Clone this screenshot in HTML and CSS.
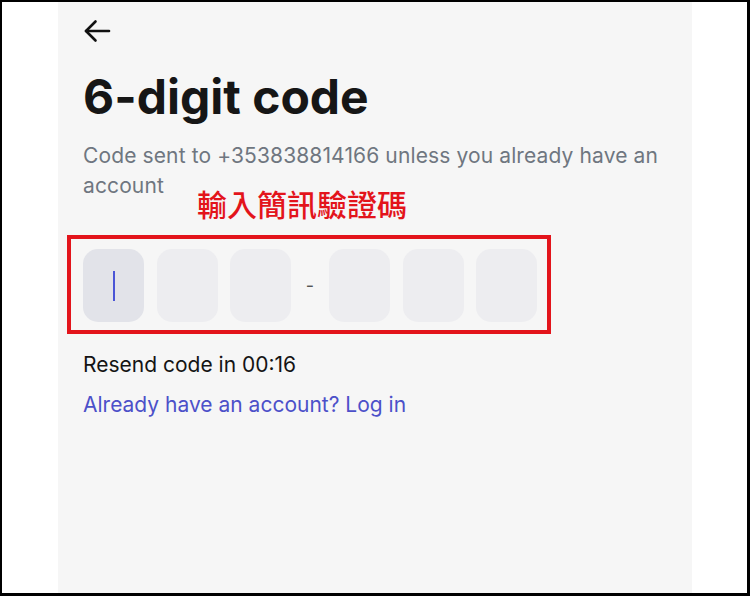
FILE: index.html
```html
<!DOCTYPE html>
<html lang="en">
<head>
	<meta charset="UTF-8">
	<title>6-digit code</title>
	<link rel="stylesheet" href="styles.css">
</head>
<body>

	<div class="frame">
		<div class="panel">
			<a class="back" href="#">
				<svg width="28" height="24" viewBox="0 0 28 24" fill="none" stroke="#111" stroke-width="2.6" stroke-linecap="round" stroke-linejoin="round">
					<path d="M26 12H3"/>
					<path d="M12.5 2.5 3 12l9.5 9.5"/>
				</svg>
			</a>

			<h1 class="title">6-digit code</h1>
			<p class="desc">Code sent to +353838814166 unless you already have an account</p>

			<div class="code">
				<div class="digit active"><span class="caret"></span></div>
				<div class="digit"></div>
				<div class="digit"></div>
				<span class="dash">-</span>
				<div class="digit"></div>
				<div class="digit"></div>
				<div class="digit"></div>
			</div>

			<p class="resend">Resend code in 00:16</p>
			<a class="login" href="#">Already have an account? Log in</a>
		</div>

		<!-- annotation -->
		<span class="note">輸入簡訊驗證碼</span>
		<div class="mark"></div>
	</div>

</body>
</html>
```

FILE: styles.css
```css
*{
	margin: 0;
	padding: 0;
}
body{
	background: #fff;
	font-family: Inter, "Noto Sans", sans-serif;
}
.frame{
	width: 750px;
	height: 596px;
	box-sizing: border-box;
	border: 2px solid #000;
	border-right-width: 3px;
	border-bottom-width: 3px;
	background: #fff;
	position: relative;
}
.panel{
	margin-left: 56px;
	width: 634px;
	height: 100%;
	box-sizing: border-box;
	padding: 17px 25px 0;
	background: #f6f6f6;
}
.back{
	display: block;
	width: 28px;
	height: 24px;
}
.back svg{
	display: block;
}
.title{
	margin-top: 26px;
	font-size: 48px;
	line-height: 56px;
	font-weight: 700;
	color: #161616;
}
.desc{
	margin-top: 16px;
	font-size: 21px;
	line-height: 30px;
	letter-spacing: 0.12px;
	color: #6f7680;
}
.code{
	display: flex;
	align-items: center;
	gap: 12.5px;
	margin-top: 48px;
}
.digit{
	width: 61px;
	height: 73px;
	border-radius: 15px;
	background: #ededf0;
	display: flex;
	align-items: center;
	justify-content: center;
}
.digit.active{
	background: #e2e3e9;
}
.caret{
	width: 2px;
	height: 30px;
	background: #4b55d6;
}
.dash{
	width: 13px;
	text-align: center;
	font-size: 18px;
	color: #555;
}
.resend{
	margin-top: 28px;
	font-size: 21px;
	line-height: 30px;
	color: #141414;
}
.login{
	display: block;
	margin-top: 10px;
	font-size: 21px;
	line-height: 30px;
	color: #4c50c9;
	text-decoration: none;
}
.note{
	position: absolute;
	left: 195px;
	top: 186px;
	font-family: "Noto Sans CJK TC", "Noto Sans CJK SC", sans-serif;
	font-size: 30px;
	line-height: 30px;
	font-weight: 500;
	color: #e3141b;
}
.mark{
	position: absolute;
	left: 65px;
	top: 233px;
	width: 484px;
	height: 99px;
	box-sizing: border-box;
	border: 4px solid #e3141b;
}
```
